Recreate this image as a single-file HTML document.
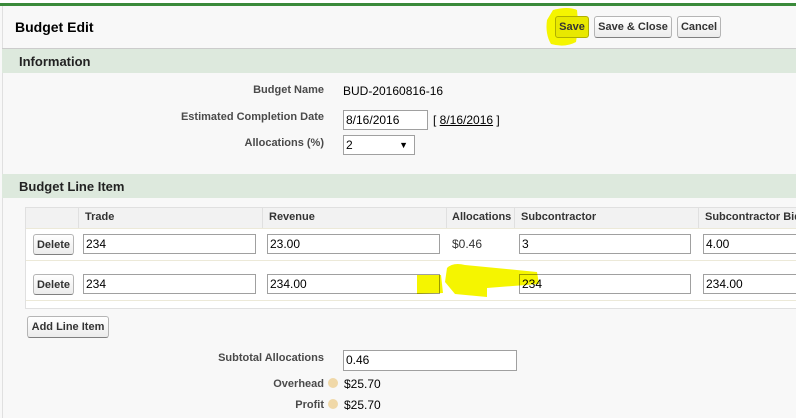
<!DOCTYPE html>
<html><head><style>
body{margin:0;width:796px;height:418px;overflow:hidden;background:#f8f8f8;font-family:"Liberation Sans",Arial,sans-serif;position:relative}
.a{position:absolute}
.lbl{position:absolute;right:472px;font-size:11px;font-weight:bold;color:#4a4a4a;text-align:right;white-space:nowrap}
.val{position:absolute;font-size:12px;color:#000}
.inp{position:absolute;background:#fff;border:1px solid #a0a0a0;box-sizing:border-box;font-size:12px;padding:1px 2px;line-height:16px}
.btn{position:absolute;box-sizing:border-box;border:1px solid #b5b5b5;border-bottom-color:#7f7f7f;border-radius:3px;background:linear-gradient(#fff,#ececec);font-size:11px;font-weight:bold;color:#333;text-align:center;line-height:20px}
.bar{position:absolute;left:2px;right:0;background:#dde9dd;font-size:13px;font-weight:bold;color:#222;padding-left:17px;box-sizing:border-box}
.th{position:absolute;top:207px;height:21px;line-height:21px;font-size:11px;font-weight:bold;color:#333;border-left:1px solid #e0e0e0;padding-left:6px;box-sizing:border-box}
</style></head><body>
<div class="a" style="left:0;top:0;width:796px;height:3px;background:#fff"></div>
<div class="a" style="left:0;top:3px;width:796px;height:3px;background:#3a8a3a"></div>
<div class="a" style="left:2px;top:6px;width:1px;height:412px;background:#e0e0e0"></div>
<div class="a" style="left:15px;top:19px;font-size:14px;font-weight:bold;color:#000">Budget Edit</div>
<svg class="a" style="left:543px;top:6px" width="52" height="44"><path d="M10 4 Q25 0 34 4 Q36 20 33 36 Q22 42 8 38 Q2 28 4 14 Z" fill="#f5f500"/></svg>
<div class="btn" style="left:555px;top:16px;width:34px;height:22px;background:#e8e800;border-color:#b0b000">Save</div>
<div class="btn" style="left:594px;top:16px;width:78px;height:22px">Save &amp; Close</div>
<div class="btn" style="left:677px;top:16px;width:44px;height:22px">Cancel</div>
<div class="a" style="left:2px;top:48px;width:794px;height:1px;background:#ccc"></div>
<div class="bar" style="top:49px;height:24px;line-height:25px">Information</div>
<div class="lbl" style="top:84px">Budget Name</div>
<div class="val" style="left:343px;top:84px">BUD-20160816-16</div>
<div class="lbl" style="top:111px">Estimated Completion Date</div>
<div class="inp" style="left:343px;top:110px;width:85px;height:20px">8/16/2016</div>
<div class="val" style="left:433px;top:113px">[ <span style="text-decoration:underline">8/16/2016</span> ]</div>
<div class="lbl" style="top:137px">Allocations (%)</div>
<div class="inp" style="left:343px;top:135px;width:72px;height:20px">2<span style="position:absolute;right:6px;font-size:9px">▼</span></div>
<div class="bar" style="top:174px;height:24px;line-height:25px">Budget Line Item</div>
<div class="a" style="left:25px;top:207px;width:771px;height:102px;background:#fff;border:1px solid #e0e0e0;border-right:none;box-sizing:border-box"></div>
<div class="a" style="left:26px;top:208px;width:770px;height:20px;background:#f2f2f2"></div>
<div class="th" style="left:78px;width:184px">Trade</div>
<div class="th" style="left:262px;width:184px">Revenue</div>
<div class="th" style="left:446px;width:68px;padding-left:5px">Allocations</div>
<div class="th" style="left:514px;width:184px">Subcontractor</div>
<div class="th" style="left:698px;width:98px;white-space:nowrap;overflow:hidden">Subcontractor Bid</div>
<div class="a" style="left:26px;top:228px;width:770px;height:1px;background:#ece9d8"></div>
<div class="a" style="left:26px;top:260px;width:770px;height:1px;background:#ece9d8"></div>
<div class="a" style="left:26px;top:300px;width:770px;height:1px;background:#ece9d8"></div>
<div class="btn" style="left:33px;top:234px;width:41px;height:21px">Delete</div>
<div class="inp" style="left:83px;top:234px;width:173px;height:20px">234</div>
<div class="inp" style="left:267px;top:234px;width:173px;height:20px">23.00</div>
<div class="val" style="left:452px;top:237px;color:#333">$0.46</div>
<div class="inp" style="left:519px;top:234px;width:172px;height:20px">3</div>
<div class="inp" style="left:703px;top:234px;width:100px;height:20px">4.00</div>
<div class="btn" style="left:33px;top:274px;width:41px;height:21px">Delete</div>
<div class="inp" style="left:83px;top:274px;width:173px;height:20px">234</div>
<div class="inp" style="left:267px;top:274px;width:173px;height:20px">234.00</div>
<div class="inp" style="left:519px;top:274px;width:172px;height:20px">234</div>
<div class="inp" style="left:703px;top:274px;width:100px;height:20px">234.00</div>
<svg class="a" style="left:415px;top:260px;mix-blend-mode:multiply" width="125" height="40"><path d="M2 15 L26 15 L28 33 L2 34 Z" fill="#f5f500"/><path d="M32 8 Q38 2 50 5 L122 12 L124 24 L72 28 L72 37 L40 34 L30 22 Z" fill="#f5f500"/></svg>
<div class="btn" style="left:27px;top:316px;width:82px;height:22px">Add Line Item</div>
<div class="lbl" style="top:352px">Subtotal Allocations</div>
<div class="inp" style="left:343px;top:350px;width:174px;height:21px">0.46</div>
<div class="lbl" style="top:378px;right:472px">Overhead</div>
<div class="a" style="left:328px;top:378px;width:10px;height:10px;border-radius:50%;background:#f0d8a8"></div>
<div class="val" style="left:344px;top:377px">$25.70</div>
<div class="lbl" style="top:399px;right:472px">Profit</div>
<div class="a" style="left:328px;top:399px;width:10px;height:10px;border-radius:50%;background:#f0d8a8"></div>
<div class="val" style="left:344px;top:398px">$25.70</div>
</body></html>
